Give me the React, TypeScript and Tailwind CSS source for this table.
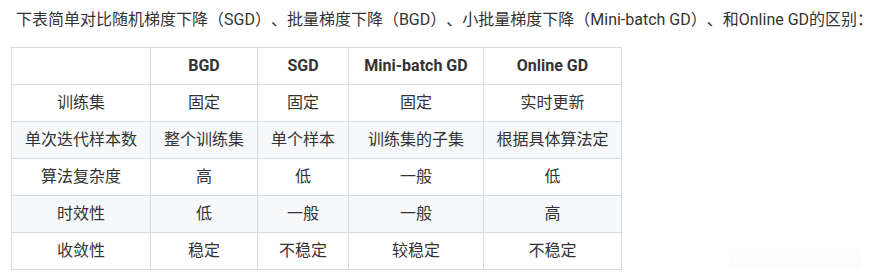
import React from "react";

const rows: string[][] = [
  ["训练集", "固定", "固定", "固定", "实时更新"],
  ["单次迭代样本数", "整个训练集", "单个样本", "训练集的子集", "根据具体算法定"],
  ["算法复杂度", "高", "低", "一般", "低"],
  ["时效性", "低", "一般", "一般", "高"],
  ["收敛性", "稳定", "不稳定", "较稳定", "不稳定"],
];

const widths = ["w-[139px]", "w-[107px]", "w-[91px]", "w-[135px]", "w-[138px]"];

export default function App() {
  return (
    <div
      className="relative w-[871px] h-[276px] bg-white text-[#333333] overflow-hidden [text-spacing-trim:space-all]"
      style={{ fontFamily: 'Roboto, "Noto Sans CJK SC", sans-serif' }}
    >
      <p className="pt-[8px] pl-[16px] text-[16px] leading-[24px] whitespace-nowrap">
        下表简单对比随机梯度下降（SGD）、批量梯度下降（BGD）、小批量梯度下降（Mini-batch GD）、和Online GD的区别：
      </p>
      <table className="ml-[11px] mt-[15px] border-collapse table-fixed text-[16px]">
        <thead>
          <tr className="bg-white">
            {["", "BGD", "SGD", "Mini-batch GD", "Online GD"].map((h, i) => (
              <th
                key={i}
                className={`${widths[i]} h-[37px] p-0 border border-[#d5dbe3] text-center font-bold`}
              >
                {h}
              </th>
            ))}
          </tr>
        </thead>
        <tbody>
          {rows.map((r, ri) => (
            <tr key={ri} className={ri % 2 === 1 ? "bg-[#f6f8fa]" : "bg-white"}>
              {r.map((c, ci) => (
                <td
                  key={ci}
                  className="h-[37px] p-0 border border-[#d5dbe3] text-center whitespace-nowrap"
                >
                  {c}
                </td>
              ))}
            </tr>
          ))}
        </tbody>
      </table>
      <div className="absolute left-[729px] top-[249px] w-[132px] h-[20px] bg-[#fcfcfc]" />
    </div>
  );
}
